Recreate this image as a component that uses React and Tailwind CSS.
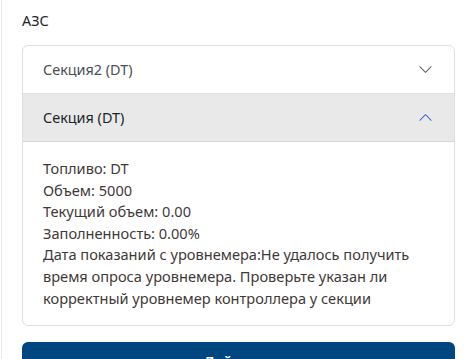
import React from "react";

const Chevron = ({ className }) => (
  <svg viewBox="0 0 16 16" className={className} fill="currentColor">
    <path
      fillRule="evenodd"
      d="M1.646 4.646a.5.5 0 0 1 .708 0L8 10.293l5.646-5.647a.5.5 0 0 1 .708.708l-6 6a.5.5 0 0 1-.708 0l-6-6a.5.5 0 0 1 0-.708z"
    />
  </svg>
);

const App = () => {
  const lines = [
    "Топливо: DT",
    "Объем: 5000",
    "Текущий объем: 0.00",
    "Заполненность: 0.00%",
    "Дата показаний с уровнемера:Не удалось получить время опроса уровнемера. Проверьте указан ли корректный уровнемер контроллера у секции",
  ];

  return (
    <div
      className="h-[359px] overflow-hidden bg-white ml-[1px] border-l border-[#e9e9e9] pl-[20px] pr-[13px] pt-[11px] text-[#212529]"
      style={{ fontFamily: '"Noto Sans", "Open Sans", sans-serif' }}
    >
      {/* Заголовок */}
      <div className="text-[14.4px] leading-[20px] text-[#212529]">АЗС</div>

      {/* Аккордеон секций */}
      <div className="mt-[14px] border border-[#dfdfdf] rounded-[6px] overflow-hidden">
        <div className="h-[48px] flex items-center justify-between pl-[20px] pr-[21px] border-b border-[#dfdfdf]">
          <span className="text-[14.4px] text-[#495057]">Секция2 (DT)</span>
          <Chevron className="w-[15px] h-[15px] text-[#555]" />
        </div>

        <div className="h-[48px] flex items-center justify-between pl-[20px] pr-[21px] bg-[#e9e9e9] border-b border-[#d6d6d6]">
          <span className="text-[14.4px] text-[#212529]">Секция (DT)</span>
          <Chevron className="w-[15px] h-[15px] text-[#3b5bdb] rotate-180" />
        </div>

        <div className="px-[20px] py-[16px] text-[14.6px] leading-[21.6px] text-[#3f3a38]">
          {lines.map((l) => (
            <div key={l}>{l}</div>
          ))}
        </div>
      </div>

      {/* Кнопка */}
      <button className="mt-[16px] w-full bg-[#004680] text-white font-semibold text-[14.4px] leading-[20px] py-[10px] rounded-t-[6px]">
        Действия
      </button>
    </div>
  );
};

export default App;
